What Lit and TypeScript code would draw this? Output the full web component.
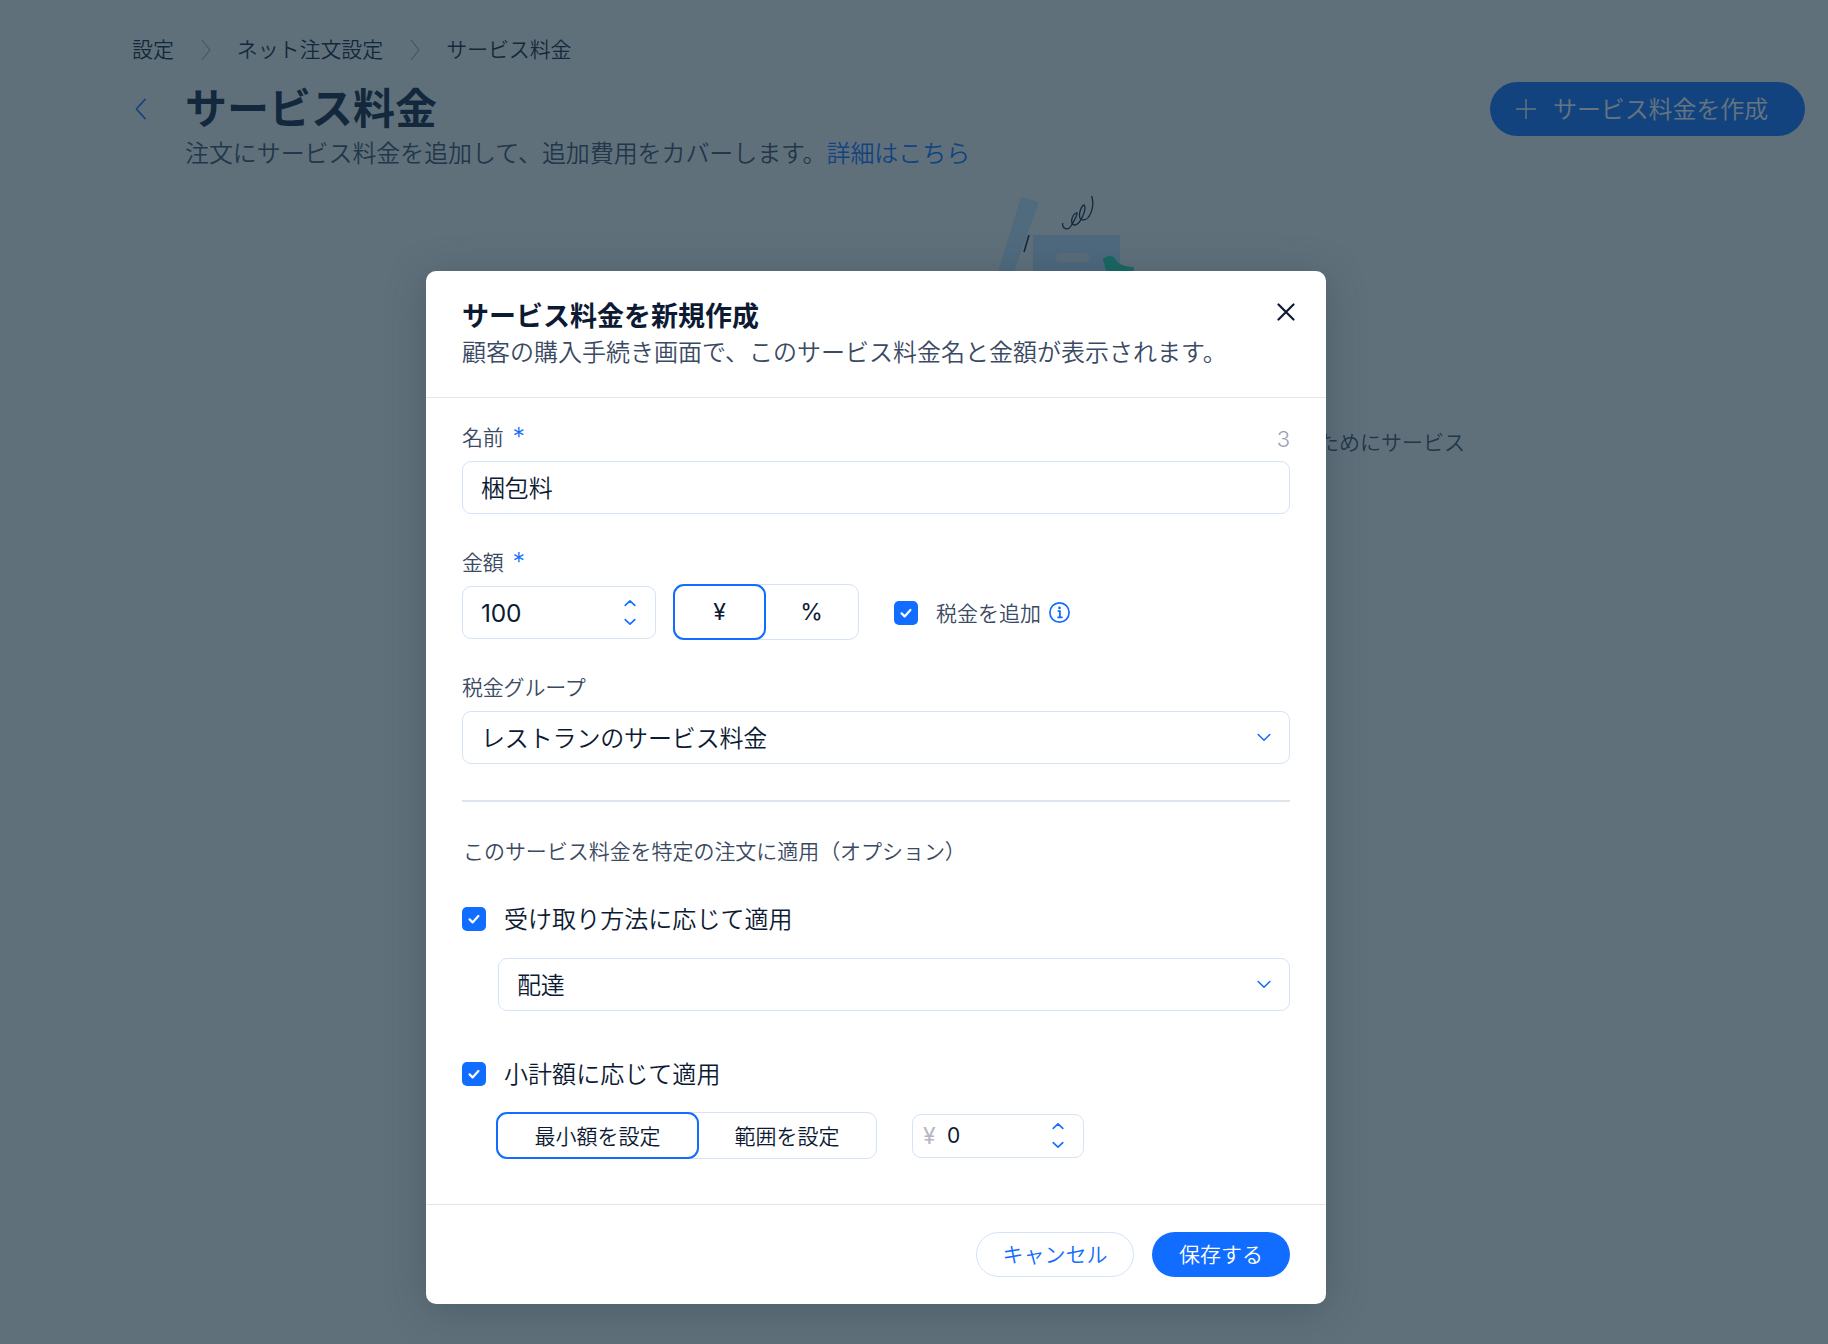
import { LitElement, html, css, svg } from "lit";
import { customElement } from "lit/decorators.js";

const chev = (d: string) => svg`<svg class="arrow" viewBox="0 0 12 8" width="12" height="8"><path d="${d}" fill="none" stroke="#116dff" stroke-width="1.6" stroke-linecap="round" stroke-linejoin="round"/></svg>`;
const up = () => chev("M1.2 6.4 6 1.8l4.8 4.6");
const down = () => chev("M1.2 1.6 6 6.2l4.8-4.6");
const check = () => html`<span class="cb"><svg viewBox="0 0 24 24" width="24" height="24"><path d="M7.6 12.4l3 3 5.8-6.4" fill="none" stroke="#fff" stroke-width="2.2" stroke-linecap="round" stroke-linejoin="round"/></svg></span>`;
const selectChev = () => html`<svg class="selchev" viewBox="0 0 14 9" width="14" height="9"><path d="M1.2 1.5 7 7.2l5.8-5.7" fill="none" stroke="#116dff" stroke-width="1.6" stroke-linecap="round" stroke-linejoin="round"/></svg>`;
const crumbSep = () => html`<svg class="sep" viewBox="0 0 10 24" width="10" height="24"><path d="M1 2l8 10-8 10" fill="none" stroke="#7f8b96" stroke-width="1"/></svg>`;

@customElement("app-root")
export class AppRoot extends LitElement {
  static styles = css`
    :host {
      display: block;
      position: relative;
      height: 1344px;
      overflow: hidden;
      background: #f0f1f3;
      font-family: "Inter", "Noto Sans CJK JP", sans-serif;
      font-weight: 350;
      color: #0f1f3d;
    }
    * { box-sizing: border-box; }
    .page { display: flex; flex-direction: column; padding: 36px 23px 0 132px; }
    .crumbs { display: flex; align-items: center; height: 28px; font-size: 21px; line-height: 28px; color: #101f35; letter-spacing: -0.1px; }
    .sep { margin: 0 26px 0 27px; }
    .head { display: flex; margin-top: 18px; }
    .back { width: 53px; padding: 16px 0 0 2px; }
    .titles { flex: 1; }
    h1 { margin: 0; font-size: 42px; line-height: 54px; font-weight: 700; }
    .sub { margin-top: 2px; font-size: 24px; line-height: 32px; color: #3b4a63; letter-spacing: -0.08px; }
    .sub a { color: #116dff; }
    .create { display: flex; align-items: center; gap: 17px; width: 315px; height: 54px; padding-left: 26px; border-radius: 27px; background: #116dff; color: #fff; font-size: 24px; letter-spacing: -0.1px; }
    .create span { margin-bottom: 3px; }
    .illus { align-self: center; margin-top: 20px; display: block; }
    .empty { text-align: right; padding-right: 340px; font-size: 21px; line-height: 28px; color: #3b4a63; }
    .overlay { position: absolute; inset: 0; background: rgba(22, 45, 61, 0.66); }
    .modal {
      position: absolute; left: 426px; top: 271px; width: 900px; height: 1032.5px;
      display: flex; flex-direction: column;
      background: #fff; border-radius: 10px;
      box-shadow: 0 6px 40px rgba(22, 45, 61, 0.28);
    }
    .mhead { position: relative; padding: 28px 36px 26px; border-bottom: 1px solid #e3e7ec; }
    .mtitle { font-size: 27px; line-height: 36px; font-weight: 700; color: #0c1a33; }
    .msub { font-size: 24px; line-height: 36px; color: #3b4a63; letter-spacing: 0; white-space: nowrap; }
    .close { position: absolute; right: 31px; top: 32px; display: block; }
    .mbody { flex: 1; padding: 26px 36px 0; display: flex; flex-direction: column; }
    .mfoot { border-top: 1px solid #e3e7ec; height: 100px; padding: 27.5px 36px 26px; display: flex; justify-content: flex-end; gap: 18px; }
    .lab { display: flex; justify-content: space-between; height: 28px; margin-bottom: 9px; font-size: 21px; line-height: 27.5px; color: #3b4a63; letter-spacing: -0.2px; }
    .star { color: #116dff; margin-left: 9px; font-size: 25px; line-height: 20px; position: relative; top: 1px; }
    .count { color: #9aa1b4; font-size: 22px; line-height: 30px; }
    .field { display: flex; align-items: center; height: 53px; border: 1px solid #d5e3f4; border-radius: 9px; padding: 0 18px 0 18px; font-size: 24px; color: #0c1a33; justify-content: space-between; letter-spacing: -0.15px; }
    .tx { margin-bottom: 3px; }
    .gap { margin-top: 35px; }
    .amount { display: flex; align-items: flex-start; height: 53px; }
    .stepper { width: 194px; }
    .num { font-weight: 400; font-size: 24.5px; padding-top: 1px; }
    .arrows { display: flex; flex-direction: column; gap: 11px; margin-right: 1px; }
    .arrow { display: block; }
    .seg { display: flex; border: 1px solid #d5e3f4; border-radius: 10px; background: #fff; font-size: 21px; color: #0c1a33; }
    .seg > div { display: flex; align-items: center; justify-content: center; margin: -1px; border: 2.5px solid transparent; border-radius: 11px; }
    .seg > .on { border-color: #116dff; }
    .seg .tx { margin-bottom: 2px; }
    .seg1 { width: 186px; height: 56px; margin: -2px 0 0 17px; font-size: 23px; font-weight: 400; }
    .seg1 > div:first-child { width: 93px; }
    .seg1 > div:last-child { flex: 1; }
    .cb { flex: none; display: block; width: 24px; height: 24px; border-radius: 5px; background: #116dff; }
    .tax { display: flex; align-items: center; align-self: center; margin-left: 35px; font-size: 21px; color: #3b4a63; }
    .tax .cb { margin-right: 18px; }
    .tax .t { margin-bottom: 2px; }
    .info { margin-left: 7px; display: block; }
    .rule { height: 2px; margin-top: 36px; background: #dfe5ec; }
    .opt { margin-top: 36px; font-size: 21px; line-height: 28px; color: #3b4a63; letter-spacing: -0.05px; padding-left: 1px; }
    .chk { display: flex; align-items: center; gap: 18px; height: 28px; font-size: 24px; color: #0c1a33; letter-spacing: 0.05px; }
    .chk .t { margin-bottom: 3px; }
    .chk1 { margin-top: 39px; }
    .chk2 { margin-top: 49px; }
    .indent { margin-left: 36px; }
    .sel2 { margin-top: 25px; }
    .row2 { display: flex; align-items: center; height: 47px; margin-top: 24px; }
    .seg2 { width: 381px; height: 47px; margin-left: 34px; }
    .seg2 > div:first-child { width: 203px; }
    .seg2 > div:last-child { flex: 1; }
    .mini { width: 172px; height: 44px; margin-left: 35px; border: 1px solid #d5e3f4; border-radius: 9px; display: flex; align-items: center; padding: 0 18px 0 10px; font-size: 21px; font-weight: 400; color: #0c1a33; }
    .yen { color: #b3b8c0; margin-right: 9px; width: 15px; font-size: 23px; }
    .mini .val { flex: 1; }
    .btn { display: flex; align-items: center; justify-content: center; height: 45px; border-radius: 23px; font-size: 21px; }
    .btn span { margin-bottom: 3px; }
    .cancel { width: 158px; border: 1px solid #d5e3f4; color: #116dff; }
    .save { width: 138px; background: #116dff; color: #fff; }
  `;

  render() {
    return html`
      <div class="page">
        <div class="crumbs"><span>設定</span>${crumbSep()}<span>ネット注文設定</span>${crumbSep()}<span>サービス料金</span></div>
        <div class="head">
          <div class="back">
            <svg viewBox="0 0 14 24" width="13" height="22"><path d="M12 1.5 2.5 12 12 22.5" fill="none" stroke="#116dff" stroke-width="1.8" stroke-linecap="round" stroke-linejoin="round"/></svg>
          </div>
          <div class="titles">
            <h1>サービス料金</h1>
            <div class="sub">注文にサービス料金を追加して、追加費用をカバーします。<a>詳細はこちら</a></div>
          </div>
          <div class="create">
            <svg viewBox="0 0 20 20" width="20" height="20"><path d="M10 0v20M0 10h20" stroke="#fff" stroke-width="1.4"/></svg>
            <span>サービス料金を作成</span>
          </div>
        </div>
        <svg class="illus" viewBox="0 0 340 239" width="340" height="239">
          <path d="M222 7 240 12 205 110 190 110Z" fill="#c2e0fb"/>
          <rect x="234" y="45" width="87" height="90" fill="#bcdcf8"/>
          <rect x="257" y="63" width="33" height="9" rx="4" fill="#dfe8ee"/>
          <path d="M230 45 225 62" stroke="#0f1f3d" stroke-width="1.6" fill="none"/>
          <path d="M263.7 33C263 39 269 41 272 36 276 30 280 21 277 23 273 25 270 35 276 35 282 34 288 18 285 15 282 15 277 30 284 30 291 30 296 17 292.7 6" stroke="#0f1f3d" stroke-width="1.3" fill="none"/>
          <path d="M303.7 69C307 66 311 65 314 67 317 69 318 72 321 74 325 76 330 77 335 77L334 90 310 90C307 82 306 75 303.7 69Z" fill="#1fd9ae"/>
        </svg>
        <div class="empty">ためにサービス</div>
      </div>
      <div class="overlay">
        <div class="modal">
          <div class="mhead">
            <div class="mtitle">サービス料金を新規作成</div>
            <div class="msub">顧客の購入手続き画面で、このサービス料金名と金額が表示されます。</div>
            <svg class="close" viewBox="0 0 18 18" width="18" height="18"><path d="M1.5 1.5l15 15M16.5 1.5l-15 15" stroke="#0c1a33" stroke-width="2.2" stroke-linecap="round"/></svg>
          </div>
          <div class="mbody">
            <div class="lab"><span>名前<span class="star">*</span></span><span class="count">3</span></div>
            <div class="field"><span class="tx">梱包料</span></div>

            <div class="lab gap"><span>金額<span class="star">*</span></span></div>
            <div class="amount">
              <div class="field stepper"><span class="num">100</span><span class="arrows">${up()}${down()}</span></div>
              <div class="seg seg1"><div class="on">¥</div><div>%</div></div>
              <div class="tax">
                ${check()}<span class="t">税金を追加</span>
                <svg class="info" viewBox="0 0 22 22" width="23" height="23"><circle cx="11" cy="11" r="9.2" fill="none" stroke="#116dff" stroke-width="1.6"/><circle cx="11" cy="6.6" r="1.3" fill="#116dff"/><path d="M9.2 9.6H11.4V15.4M9 15.6h5" fill="none" stroke="#116dff" stroke-width="1.7"/></svg>
              </div>
            </div>

            <div class="lab gap">税金グループ</div>
            <div class="field"><span class="tx">レストランのサービス料金</span>${selectChev()}</div>

            <div class="rule"></div>
            <div class="opt">このサービス料金を特定の注文に適用（オプション）</div>

            <div class="chk chk1">${check()}<span class="t">受け取り方法に応じて適用</span></div>
            <div class="field indent sel2"><span class="tx">配達</span>${selectChev()}</div>

            <div class="chk chk2">${check()}<span class="t">小計額に応じて適用</span></div>
            <div class="row2">
              <div class="seg seg2"><div class="on"><span class="tx">最小額を設定</span></div><div><span class="tx">範囲を設定</span></div></div>
              <div class="mini"><span class="yen">¥</span><span class="val">0</span><span class="arrows">${up()}${down()}</span></div>
            </div>
          </div>
          <div class="mfoot">
            <div class="btn cancel"><span>キャンセル</span></div>
            <div class="btn save"><span>保存する</span></div>
          </div>
        </div>
      </div>
    `;
  }
}
